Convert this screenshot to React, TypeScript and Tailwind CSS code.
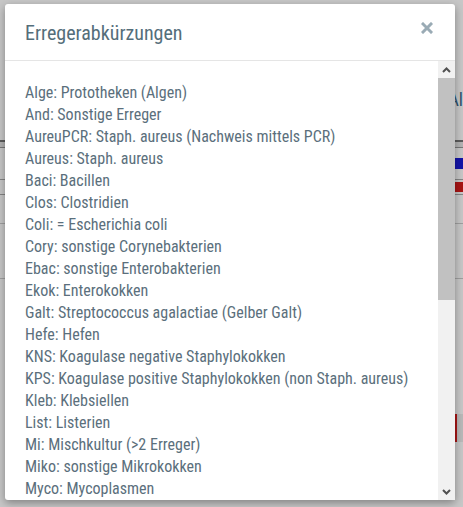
const items = [
  "Alge: Prototheken (Algen)",
  "And: Sonstige Erreger",
  "AureuPCR: Staph. aureus (Nachweis mittels PCR)",
  "Aureus: Staph. aureus",
  "Baci: Bacillen",
  "Clos: Clostridien",
  "Coli: = Escherichia coli",
  "Cory: sonstige Corynebakterien",
  "Ebac: sonstige Enterobakterien",
  "Ekok: Enterokokken",
  "Galt: Streptococcus agalactiae (Gelber Galt)",
  "Hefe: Hefen",
  "KNS: Koagulase negative Staphylokokken",
  "KPS: Koagulase positive Staphylokokken (non Staph. aureus)",
  "Kleb: Klebsiellen",
  "List: Listerien",
  "Mi: Mischkultur (>2 Erreger)",
  "Miko: sonstige Mikrokokken",
  "Myco: Mycoplasmen",
];

const font = { fontFamily: '"Roboto Condensed", "Liberation Sans Narrow", "Arial Narrow", Roboto, sans-serif' };

export default function App() {
  return (
    <div className="relative h-[507px] w-[463px] overflow-hidden bg-white" style={font}>
      {/* page behind the dialog */}
      <div className="pt-[90px]">
        <div className="flex justify-end pr-0 text-[18px] text-[#3b6a8c] h-[20px] leading-[20px]">Al</div>
        <div className="mt-[30px] border-t-2 border-[#777]" />
        <div className="h-[6px] bg-[#e6e6e6] border-b border-[#999]" />
        <div className="mt-[10px] flex justify-end">
          <div className="h-[11px] w-[20px] bg-[#1a1ad8]" />
        </div>
        <div className="mt-[10px] border-t border-[#aaa]" />
        <div className="mt-[2px] flex justify-end">
          <div className="h-[10px] w-[20px] bg-[#d81a1a]" />
        </div>
        <div className="mt-[2px] border-t border-[#aaa]" />
        <div className="mt-[28px] border-t border-[#ccc]" />
        <div className="mt-[54px] border-t border-[#ccc]" />
        <div className="mt-[135px] flex justify-end">
          <div className="h-[28px] w-[8px] border-l-2 border-[#d81a1a] bg-[#eee]" />
        </div>
      </div>

      {/* overlay */}
      <div className="absolute inset-0 bg-black/[0.22]" />

      {/* dialog */}
      <div className="absolute left-[5px] top-[4px] flex h-[496px] w-[450px] flex-col rounded-[3px] bg-white shadow-[0_3px_9px_rgba(0,0,0,0.35)]">
        <div className="flex h-[57px] shrink-0 items-center justify-between border-b border-[#e5e5e5] pl-[20px] pr-[22px]">
          <h4 className="mt-[2px] text-[20px] leading-none text-[#546e7a]">Erregerabkürzungen</h4>
          <svg width="12" height="12" viewBox="0 0 12 12" className="mb-[9px]">
            <path d="M2 2 L10 10 M10 2 L2 10" stroke="#9aabb5" strokeWidth="3" strokeLinecap="square" />
          </svg>
        </div>
        <div className="flex min-h-0 flex-1">
          <div className="min-w-0 flex-1 overflow-hidden px-[20px] pt-[21px]">
            {items.map((t) => (
              <div key={t} className="whitespace-nowrap text-[16px] leading-[22px] text-[#5b6f7c]">
                {t}
              </div>
            ))}
          </div>
          {/* scrollbar */}
          <div className="flex w-[17px] shrink-0 flex-col bg-[#f1f1f1]">
            <div className="flex h-[17px] items-center justify-center">
              <svg width="9" height="6" viewBox="0 0 9 6">
                <path d="M1 5 L4.5 1.5 L8 5" fill="none" stroke="#505050" strokeWidth="2" />
              </svg>
            </div>
            <div className="h-[222px] bg-[#c1c1c1]" />
            <div className="flex-1" />
            <div className="flex h-[17px] items-center justify-center">
              <svg width="9" height="6" viewBox="0 0 9 6">
                <path d="M1 1 L4.5 4.5 L8 1" fill="none" stroke="#505050" strokeWidth="2" />
              </svg>
            </div>
          </div>
        </div>
      </div>
    </div>
  );
}
